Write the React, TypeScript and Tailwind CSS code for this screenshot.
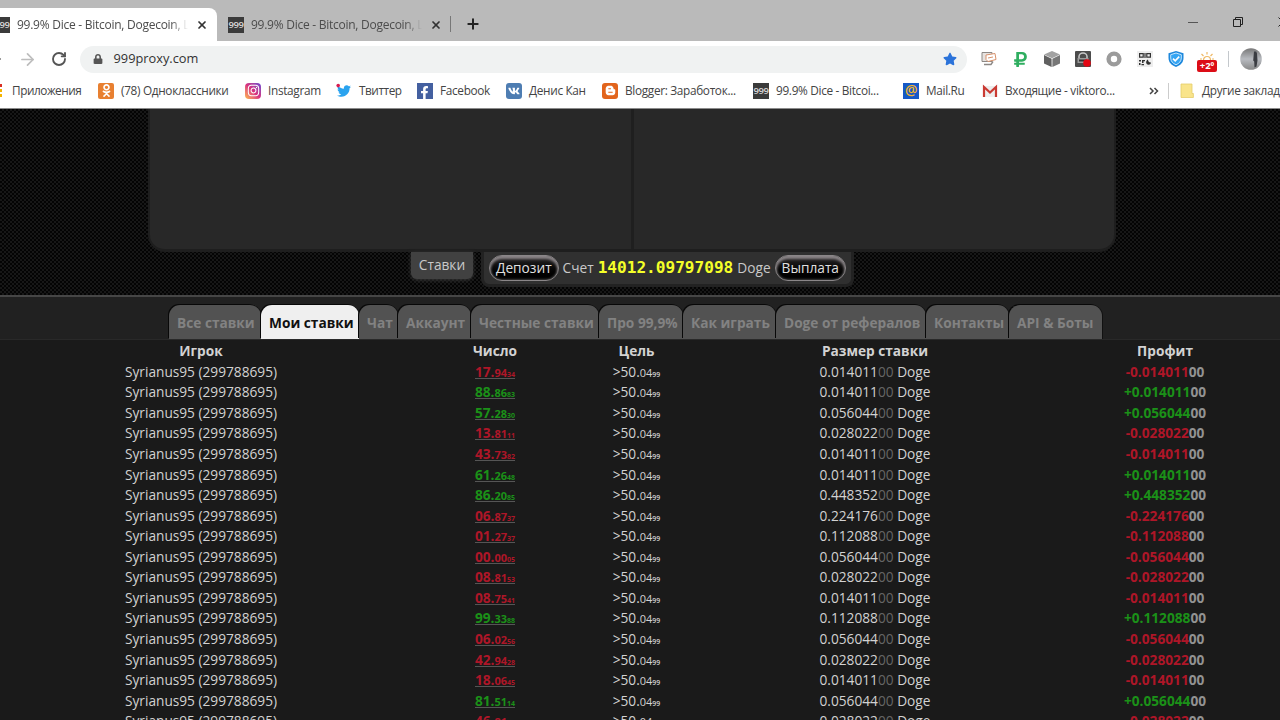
import type { ReactNode } from "react";
import { X, Plus, ArrowLeft, ArrowRight, RotateCw } from "lucide-react";
import { FaFacebookF, FaInstagram, FaTwitter, FaVk, FaBloggerB, FaOdnoklassniki, FaStar, FaLock, FaRubleSign } from "react-icons/fa";

type Bet = {
  roll: [string, string, string];
  stake: string;
  win: boolean;
};

const BETS: Bet[] = [
  { roll: ["17.", "94", "34"], stake: "0.014011", win: false },
  { roll: ["88.", "86", "83"], stake: "0.014011", win: true },
  { roll: ["57.", "28", "30"], stake: "0.056044", win: true },
  { roll: ["13.", "81", "11"], stake: "0.028022", win: false },
  { roll: ["43.", "73", "82"], stake: "0.014011", win: false },
  { roll: ["61.", "26", "48"], stake: "0.014011", win: true },
  { roll: ["86.", "20", "85"], stake: "0.448352", win: true },
  { roll: ["06.", "87", "37"], stake: "0.224176", win: false },
  { roll: ["01.", "27", "37"], stake: "0.112088", win: false },
  { roll: ["00.", "00", "05"], stake: "0.056044", win: false },
  { roll: ["08.", "81", "53"], stake: "0.028022", win: false },
  { roll: ["08.", "75", "41"], stake: "0.014011", win: false },
  { roll: ["99.", "33", "88"], stake: "0.112088", win: true },
  { roll: ["06.", "02", "56"], stake: "0.056044", win: false },
  { roll: ["42.", "94", "28"], stake: "0.028022", win: false },
  { roll: ["18.", "06", "45"], stake: "0.014011", win: false },
  { roll: ["81.", "51", "14"], stake: "0.056044", win: true },
  { roll: ["46.", "81", "20"], stake: "0.028022", win: false },
];

const TABS = [
  { label: "Все ставки", width: "w-[92px]" },
  { label: "Мои ставки", width: "w-[98px]", active: true },
  { label: "Чат", width: "w-[39px]" },
  { label: "Аккаунт", width: "w-[73px]" },
  { label: "Честные ставки", width: "w-[128px]" },
  { label: "Про 99,9%", width: "w-[84px]" },
  { label: "Как играть", width: "w-[93px]" },
  { label: "Doge от рефералов", width: "w-[150px]" },
  { label: "Контакты", width: "w-[83px]" },
  { label: "API & Боты", width: "w-[93px]" },
];

const COLUMNS = "grid grid-cols-[402px_186px_97px_380px_200px] text-center";

function Nines() {
  return (
    <span className="flex h-4 w-4 shrink-0 items-center justify-center bg-[#3b3b3b] text-[9.5px] leading-none font-semibold tracking-[-0.5px] text-[#d8d8d8]">
      999
    </span>
  );
}

function BrowserTab({ active }: { active?: boolean }) {
  return (
    <div className={`flex h-[33px] shrink-0 items-center ${active ? "w-[224px] rounded-t-lg bg-white" : "w-[233px]"}`}>
      <div className={active ? "ml-px" : "ml-[11px]"}>
        <Nines />
      </div>
      <span className="ml-[7px] w-[171px] overflow-hidden text-[12px] tracking-[-0.26px] whitespace-nowrap text-[#4c4c4c] [mask-image:linear-gradient(to_right,black_90%,transparent)]">
        99.9% Dice - Bitcoin, Dogecoin, L
      </span>
      <X className="ml-2 h-3 w-3 shrink-0 text-[#333]" strokeWidth={3.5} />
    </div>
  );
}

function Bookmark({ width, icon, children }: { width: string; icon: ReactNode; children: ReactNode }) {
  return (
    <div className={`flex shrink-0 items-center gap-[7px] whitespace-nowrap ${width}`}>
      <span className="flex h-4 w-4 shrink-0 items-center justify-center">{icon}</span>
      <span>{children}</span>
    </div>
  );
}

function BookmarkBar() {
  return (
    <div className="-ml-[11px] flex h-[31px] shrink-0 items-center pb-[4px] text-[11.8px] tracking-[-0.32px] text-[#444]">
      <Bookmark
        width="w-[109px]"
        icon={
          <svg viewBox="0 0 16 16" className="h-4 w-4">
            <path fill="#d93025" d="M0 1h3v3H0zM5 1h3v3H5zM10 1h3v3h-3z" />
            <path fill="#7cb342" d="M0 6h3v3H0zM5 6h3v3H5z" />
            <path fill="#f4b400" d="M10 6h3v3h-3zM0 11h3v3H0zM5 11h3v3H5zM10 11h3v3h-3z" />
          </svg>
        }
      >
        <span className="tracking-[-0.45px]">Приложения</span>
      </Bookmark>
      <Bookmark
        width="w-[147px]"
        icon={
          <span className="flex h-4 w-4 items-center justify-center rounded-[2px] bg-[#e88031] text-white">
            <FaOdnoklassniki size={13} />
          </span>
        }
      >
        (78) Одноклассники
      </Bookmark>
      <Bookmark
        width="w-[91px]"
        icon={
          <span className="flex h-4 w-4 items-center justify-center rounded-[4px] bg-linear-to-tr from-[#fdb83c] via-[#d92e7f] to-[#6a3fd0] text-white">
            <FaInstagram size={13} />
          </span>
        }
      >
        Instagram
      </Bookmark>
      <Bookmark
        width="w-[81px]"
        icon={
          <svg viewBox="0 0 16 16" className="h-4 w-4">
            <FaTwitter x="1" y="1" size={14} color="#2aa3ef" />
            <circle cx="2.2" cy="2.6" r="1.8" fill="#d81b50" />
          </svg>
        }
      >
        <span className="tracking-[-0.45px]">Твиттер</span>
      </Bookmark>
      <Bookmark
        width="w-[89px]"
        icon={
          <span className="flex h-4 w-4 items-end justify-end overflow-hidden bg-[#4460a0] pr-[2px] text-white">
            <FaFacebookF size={13} />
          </span>
        }
      >
        Facebook
      </Bookmark>
      <Bookmark
        width="w-[96px]"
        icon={
          <span className="flex h-4 w-4 items-center justify-center rounded-[3px] bg-[#4e7db2] text-white">
            <FaVk size={12} />
          </span>
        }
      >
        Денис Кан
      </Bookmark>
      <Bookmark
        width="w-[151px]"
        icon={
          <span className="flex h-4 w-4 items-center justify-center rounded-[3px] bg-[#e2641c] text-white">
            <FaBloggerB size={11} />
          </span>
        }
      >
        Blogger: Заработок...
      </Bookmark>
      <Bookmark width="w-[150px]" icon={<Nines />}>
        99.9% Dice - Bitcoi...
      </Bookmark>
      <Bookmark
        width="w-[79px]"
        icon={
          <span className="flex h-4 w-4 items-center justify-center bg-[#1659c7] pb-0.5 text-[14px] leading-none font-semibold text-[#f5b52e]">
            @
          </span>
        }
      >
        Mail.Ru
      </Bookmark>
      <Bookmark
        width="w-[165px]"
        icon={
          <svg viewBox="0 0 16 16" className="h-4 w-4">
            <path fill="#eee" d="M1 3h14v11H1z" />
            <path fill="none" stroke="#ca3a33" strokeWidth="2.2" d="M2 14V4l6 5.5L14 4v10" />
          </svg>
        }
      >
        Входящие - viktoro...
      </Bookmark>
      <svg viewBox="0 0 10 8" className="ml-[2px] h-2 w-[10px] shrink-0">
        <path fill="none" stroke="#444" strokeWidth="1.5" d="M1 1l3 3-3 3M5.500 1l3 3-3 3" />
      </svg>
      <div className="ml-[9px] h-4 w-px shrink-0 bg-[#ccc]" />
      <div className="ml-[11px] flex shrink-0 items-center gap-[8px] whitespace-nowrap">
        <svg viewBox="0 0 14 16" className="h-4 w-[14px]">
          <path fill="#f9e48b" stroke="#e5cd6b" strokeWidth="0.8" d="M1 1h11v9.500h1.400V14.500H1z" />
        </svg>
        <span>Другие закладки</span>
      </div>
    </div>
  );
}

function Extensions() {
  return (
    <>
      <svg viewBox="0 0 16 16" className="ml-[14px] h-4 w-4 shrink-0">
        <path fill="#e6e2df" stroke="#8c8885" strokeWidth="1" d="M1 1.500h10v9H1z" />
        <path fill="#fff" stroke="#d8926c" strokeWidth="1" d="M5 4l9-1.500 1 6-8 2-2-2zM7 7l5-1" />
        <path fill="none" stroke="#8c8885" strokeWidth="1.400" d="M3 13.500h7l2-3" />
      </svg>
      <FaRubleSign className="ml-[15px] shrink-0 text-[#2fae60]" size={17} />
      <svg viewBox="0 0 16 16" className="ml-[15px] h-4 w-4 shrink-0">
        <path fill="#a2a2a2" d="M8 0l8 3.400-8 3.800-8-3.800z" />
        <path fill="#606060" d="M0 4l7.600 3.700V16L0 12.500z" />
        <path fill="#777" d="M16 4L8.400 7.700V16L16 12.500z" />
      </svg>
      <svg viewBox="0 0 16 16" className="ml-[15px] h-4 w-4 shrink-0">
        <rect width="16" height="16" rx="1" fill="#4c4c4c" />
        <path fill="none" stroke="#c9c9c9" strokeWidth="1.500" d="M4 7V5.500a4 3.500 0 018 0V7" />
        <path fill="#9b9b9b" d="M2.500 7h11v5h-11z" />
        <path fill="#333" d="M4 8.500h8v2H4z" />
        <circle cx="12" cy="12" r="3.800" fill="#e30613" />
      </svg>
      <svg viewBox="0 0 16 16" className="ml-[15px] h-4 w-4 shrink-0">
        <circle cx="8" cy="8" r="5.400" fill="none" stroke="#9b9b9b" strokeWidth="4.400" />
      </svg>
      <svg viewBox="0 0 16 16" className="ml-[15px] h-4 w-4 shrink-0">
        <rect width="16" height="16" fill="#eee" />
        <path fill="none" stroke="#333" strokeWidth="1.200" d="M2.600 2.600h3.600v3.600H2.600zM9.800 2.600h3.600v3.600H9.800z" />
        <path fill="#333" d="M7.400 2h1.200v5H7.400zM2 9h2v1.500H2zM5 9h3v1.200H6.500V12H5zM2 12h1.500v2H2zM4.500 13H7v1.200H4.500zM11 8.500c-2.500 1-2.500 5 .5 5.300 1.500 0 2.300-1 2.500-2.300-1.500.3-3-.8-3-3z" />
      </svg>
      <svg viewBox="0 0 16 16" className="ml-[15px] h-4 w-4 shrink-0">
        <path fill="#1e88dc" d="M8 0l7.500 2.300V7c0 4.500-3.200 7.400-7.500 9C3.700 14.400.5 11.500.5 7V2.300z" />
        <path fill="#35a5f3" stroke="#d7eeff" strokeWidth=".9" d="M8 2l5.300 1.700V7c0 3.200-2 5.400-5.300 6.800C4.700 12.400 2.700 10.200 2.700 7V3.700z" />
        <path fill="none" stroke="white" strokeWidth="1.600" d="M5 7.600l2.200 2.200 4-4.200" />
      </svg>
      <div className="ml-[13px] flex w-5 shrink-0 flex-col items-center pt-[5px]">
        <svg viewBox="0 0 14 8" className="h-2 w-[14px]">
          <path fill="none" stroke="#efb965" strokeWidth="1.200" d="M3.500 8a3.500 3.500 0 017 0M7 0v2.500M1.500 2l2 2M12.500 2l-2 2M0 7h2M12 7h2" />
        </svg>
        <span className="h-[12px] w-5 rounded-[2px] bg-[#dc0d17] text-center text-[9.5px] leading-[11px] font-bold text-white">+2º</span>
      </div>
      <div className="ml-[11px] h-4 w-px shrink-0 bg-[#c4c8cc]" />
      <svg viewBox="0 0 22 22" className="ml-[11px] h-[22px] w-[22px] shrink-0">
        <defs>
          <linearGradient id="avatar" x1="0" y1="0" x2="0" y2="1">
            <stop offset="0" stopColor="#777" />
            <stop offset=".5" stopColor="#b8bbc0" />
            <stop offset="1" stopColor="#888" />
          </linearGradient>
        </defs>
        <circle cx="11" cy="11" r="10.800" fill="url(#avatar)" />
        <path fill="#3b3d42" d="M14 3.500h2.200l.8 2 .5 7-1 6-2 1-.3-6-1-1z" />
      </svg>
    </>
  );
}

function BrowserChrome() {
  return (
    <div className="flex h-[109px] shrink-0 flex-col overflow-hidden border-b border-[#8b8b8b] bg-white font-['Open_Sans','Noto_Sans',sans-serif]">
      {/* Window title bar */}
      <div className="flex h-[41px] shrink-0 bg-[#bababa] pt-2">
        <div className="-ml-[7px] flex">
          <BrowserTab active />
          <BrowserTab />
        </div>
        <div className="mt-2 h-4 w-px bg-[#777]" />
        <Plus className="mt-2 ml-[14px] h-4 w-4 text-[#222]" strokeWidth={3} />
        <svg viewBox="0 0 100 20" className="mt-1 ml-auto h-5 w-[100px] shrink-0" fill="none" stroke="#222">
          <path d="M8 10.500h10" stroke="#555" />
          <path d="M53.500 7.500h7v7h-7zM55.500 7.500v-2h7v7h-2M98.500 5.500l9 9M98.500 14.500l9-9" />
        </svg>
      </div>

      {/* Navigation and address */}
      <div className="flex h-[36px] shrink-0 items-center">
        <ArrowLeft className="-ml-[14px] h-[18px] w-[18px] shrink-0 text-[#555]" strokeWidth={2} />
        <ArrowRight className="ml-[14px] h-[19px] w-[19px] shrink-0 text-[#bdbdbd]" strokeWidth={2.2} />
        <RotateCw className="ml-[14px] h-4 w-4 shrink-0 text-[#555]" strokeWidth={2.8} />
        <div className="ml-[13px] flex h-[27px] w-[887px] shrink-0 items-center rounded-full bg-[#f0f2f2] pr-[10px] pl-[13px]">
          <FaLock size={10} className="text-[#555]" />
          <span className="ml-[10.5px] text-[12.8px] text-[#333]">999proxy.com</span>
          <FaStar size={14} className="ml-auto text-[#2b73da]" />
        </div>
        <Extensions />
      </div>

      <BookmarkBar />
    </div>
  );
}

function PillButton({ children }: { children: ReactNode }) {
  return (
    <button className="h-[26px] rounded-full border border-[#8a8688] bg-linear-to-b from-[#2a2829] to-black px-[6px] text-[13.7px] leading-[22px] text-[#e0e0e0] shadow-[inset_0_3px_3px_#8a8487,inset_0_0_3px_#777]">
      {children}
    </button>
  );
}

function Stage() {
  return (
    <div className="flex h-[186px] shrink-0 flex-col bg-[#050505] bg-[repeating-conic-gradient(#171717_0_25%,#040404_0_50%)] bg-[length:4px_4px]">
      <div className="ml-[148px] flex h-[143px] w-[968px] shrink-0 overflow-hidden rounded-b-[17px] border-x-2 border-b-3 border-[#1e1e1e] bg-[#282828]">
        <div className="w-[484px] border-r-3 border-[#1f1f1f]" />
      </div>
      <div className="flex items-start pl-[411px]">
        <div className="h-[27px] w-[62px] rounded-b-[6px] bg-[#414141] text-center text-[13.7px] leading-[26px] text-[#c9c9c9] shadow-[0_1px_4px_#3a3a3a]">
          Ставки
        </div>
        <div className="ml-[8px] flex h-[35px] w-[373px] items-center justify-center gap-1 rounded-b-[8px] border-x-3 border-b-3 border-[#222] bg-[#303030] text-[13.7px] whitespace-nowrap text-[#c9c9c9]">
          <PillButton>Депозит</PillButton>
          <span>Счет</span>
          <span className="font-['DejaVu_Sans_Mono','Liberation_Mono',monospace] text-[16.1px] leading-5 font-bold text-[#f4ff28]">14012.09797098</span>
          <span>Doge</span>
          <PillButton>Выплата</PillButton>
        </div>
      </div>
    </div>
  );
}

function SectionTabs() {
  return (
    <div className="flex h-[45px] shrink-0 items-end border-t-2 border-b border-t-[#464646] border-b-[#292929] bg-[#212121] pl-[169px]">
      {TABS.map((tab) => (
        <div
          key={tab.label}
          className={`h-[34px] shrink-0 rounded-t-[11px] pl-2 text-[13.7px] leading-[36px] font-bold whitespace-nowrap shadow-[-1px_-1px_0_#080808,1px_0_0_#111] ${tab.width} ${
            tab.active ? "bg-[#efefef] text-[#111]" : "bg-[#525252] text-[#828282]"
          }`}
        >
          {tab.label}
        </div>
      ))}
    </div>
  );
}

function BetRow({ bet }: { bet: Bet }) {
  const color = bet.win ? "text-[#1b9118]" : "text-[#ae1628]";
  return (
    <div className={`h-[20.56px] shrink-0 ${COLUMNS}`}>
      <div>Syrianus95 (299788695)</div>
      <div>
        <a className={`inline-block h-[17px] border-b border-[#555] leading-[20px] font-bold ${color}`}>
          {bet.roll[0]}
          <span className="text-[11px]">{bet.roll[1]}</span>
          <span className="text-[7px]">{bet.roll[2]}</span>
        </a>
      </div>
      <div>
        &gt;50.<span className="text-[11px]">04</span>
        <span className="text-[7px] font-semibold">99</span>
      </div>
      <div>
        {bet.stake}
        <span className="text-[#666]">00</span> Doge
      </div>
      <div className={`font-bold ${color}`}>
        {bet.win ? "+" : "-"}
        {bet.stake}
        <span className="text-[#929292]">00</span>
      </div>
    </div>
  );
}

export default function App() {
  return (
    <div className="flex h-[720px] w-[1280px] flex-col overflow-hidden bg-[#1a1a1a] font-['Open_Sans','Noto_Sans',sans-serif]">
      <BrowserChrome />
      <Stage />
      <SectionTabs />

      {/* My bets */}
      <div className="flex min-h-0 flex-1 flex-col overflow-hidden pt-[1.3px] text-[13.7px] leading-[20.5px] whitespace-nowrap text-[#d2d2d2]">
        <div className={`h-[20.56px] shrink-0 font-bold ${COLUMNS}`}>
          <div>Игрок</div>
          <div>Число</div>
          <div>Цель</div>
          <div>Размер ставки</div>
          <div>Профит</div>
        </div>
        {BETS.map((bet, i) => (
          <BetRow key={i} bet={bet} />
        ))}
      </div>
    </div>
  );
}
